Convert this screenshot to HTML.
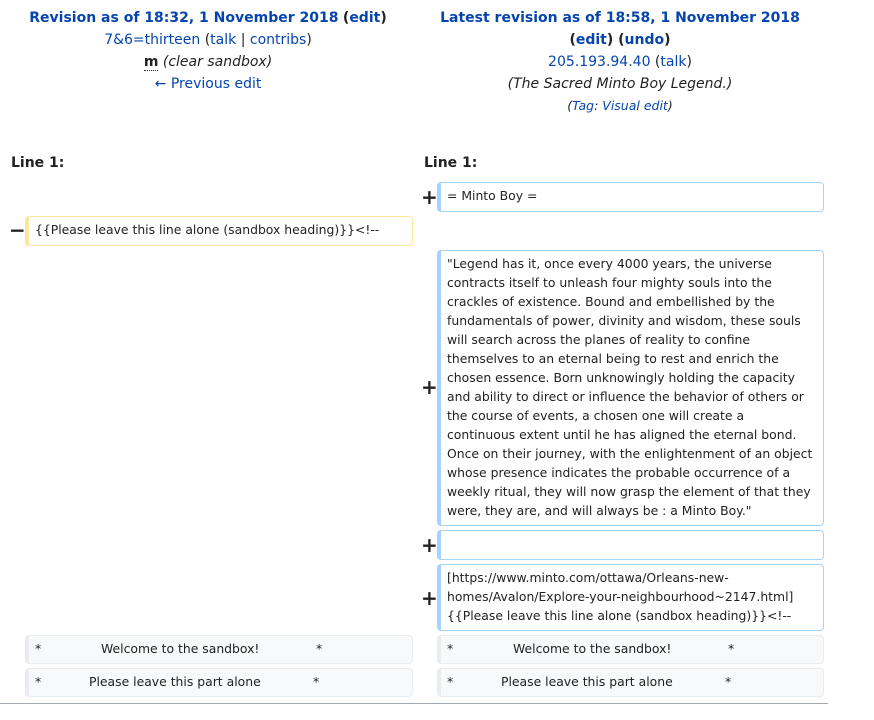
<!DOCTYPE html>
<html><head><meta charset="utf-8"><style>
body{margin:0;width:874px;height:720px;background:#fff;font-family:"DejaVu Sans","Liberation Sans",sans-serif;color:#222;position:relative;overflow:hidden}
.a{position:absolute}
.h{font-size:14px;line-height:22px;text-align:center;width:410px}
a,.l{color:#0645ad;text-decoration:none}
.bl{font-weight:bold}
.box{position:absolute;box-sizing:border-box;border:1px solid #a3d3ff;border-left:4px solid #a3d3ff;border-radius:4px;font-size:12.4px;line-height:19px;padding:0 9px 0 6px;color:#222}
.del{border-color:#ffe49c}
.ctx{border-color:#eaecf0;background:#f8f9fa}
.m{position:absolute;font-size:20px;font-weight:bold;line-height:20px}
.s{position:absolute;top:3px}
</style></head><body>
<div class="a h" style="left:3px;top:7px">
<div><span class="l bl">Revision as of 18:32, 1 November 2018</span> <b>(<span class="l">edit</span>)</b></div>
<div><span class="l">7&amp;6=thirteen</span> (<span class="l">talk</span> | <span class="l">contribs</span>)</div>
<div><b style="border-bottom:1px dotted #222">m</b> <i>(clear sandbox)</i></div>
<div><span class="l">← Previous edit</span></div>
</div>
<div class="a h" style="left:415px;top:7px">
<div><span class="l bl">Latest revision as of 18:58, 1 November 2018</span></div>
<div><b>(<span class="l">edit</span>) (<span class="l">undo</span>)</b></div>
<div><span class="l">205.193.94.40</span> (<span class="l">talk</span>)</div>
<div><i>(The Sacred Minto Boy Legend.)</i></div>
<div style="font-size:12.5px"><i>(<span class="l">Tag</span>: <span class="l">Visual edit</span>)</i></div>
</div>
<div class="a bl" style="left:11px;top:155px;font-size:14px">Line 1:</div>
<div class="a bl" style="left:424px;top:155px;font-size:14px">Line 1:</div>

<div class="m" style="left:421px;top:187px">+</div>
<div class="box" style="left:437px;top:182px;width:387px;height:30px;padding-top:3px">= Minto Boy =</div>

<div class="m" style="left:9px;top:220px">−</div>
<div class="box del" style="left:25px;top:216px;width:388px;height:30px;padding-top:3px">{{Please leave this line alone (sandbox heading)}}&lt;!--</div>

<div class="m" style="left:421px;top:377px">+</div>
<div class="box" style="left:437px;top:250px;width:387px;height:276px;padding-top:3px">"Legend has it, once every 4000 years, the universe contracts itself to unleash four mighty souls into the crackles of existence. Bound and embellished by the fundamentals of power, divinity and wisdom, these souls will search across the planes of reality to confine themselves to an eternal being to rest and enrich the chosen essence. Born unknowingly holding the capacity and ability to direct or influence the behavior of others or the course of events, a chosen one will create a continuous extent until he has aligned the eternal bond. Once on their journey, with the enlightenment of an object whose presence indicates the probable occurrence of a weekly ritual, they will now grasp the element of that they were, they are, and will always be : a Minto Boy."</div>

<div class="m" style="left:421px;top:535px">+</div>
<div class="box" style="left:437px;top:530px;width:387px;height:30px"></div>

<div class="m" style="left:421px;top:588px">+</div>
<div class="box" style="left:437px;top:564px;width:387px;height:67px;padding-top:3px">[https://www.minto.com/ottawa/Orleans-new-homes/Avalon/Explore-your-neighbourhood~2147.html] {{Please leave this line alone (sandbox heading)}}&lt;!--</div>

<div class="box ctx" style="left:25px;top:635px;width:388px;height:29px"><span class="s" style="left:6px">*</span><span class="s" style="left:72px">Welcome to the sandbox!</span><span class="s" style="left:287px">*</span></div>
<div class="box ctx" style="left:25px;top:668px;width:388px;height:29px"><span class="s" style="left:6px">*</span><span class="s" style="left:60px">Please leave this part alone</span><span class="s" style="left:284px">*</span></div>
<div class="box ctx" style="left:437px;top:635px;width:387px;height:29px"><span class="s" style="left:6px">*</span><span class="s" style="left:72px">Welcome to the sandbox!</span><span class="s" style="left:287px">*</span></div>
<div class="box ctx" style="left:437px;top:668px;width:387px;height:29px"><span class="s" style="left:6px">*</span><span class="s" style="left:60px">Please leave this part alone</span><span class="s" style="left:284px">*</span></div>

<div class="a" style="left:0;top:703px;width:828px;height:1px;background:#a2a9b1"></div>
</body></html>
